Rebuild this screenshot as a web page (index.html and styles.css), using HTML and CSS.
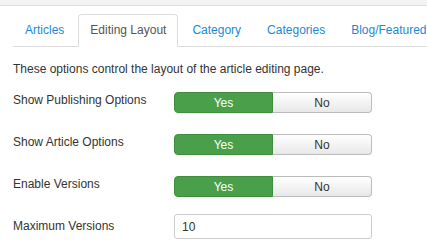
FILE: index.html
```html
<!DOCTYPE html>
<html lang="en">
<head>
    <meta charset="UTF-8">
    <title>Editing Layout</title>
    <link rel="stylesheet" href="styles.css">
</head>
<body>
    <div class="topbar"></div>

    <div class="content">
        <!-- tabs -->
        <ul class="nav-tabs">
            <li><a href="#">Articles</a></li>
            <li class="active"><a href="#">Editing Layout</a></li>
            <li><a href="#">Category</a></li>
            <li><a href="#">Categories</a></li>
            <li><a href="#">Blog/Featured Layouts</a></li>
        </ul>

        <p class="tab-desc">These options control the layout of the article editing page.</p>

        <div class="control-group">
            <label class="control-label">Show Publishing Options</label>
            <div class="btn-group">
                <button class="btn btn-yes">Yes</button>
                <button class="btn btn-no">No</button>
            </div>
        </div>

        <div class="control-group">
            <label class="control-label">Show Article Options</label>
            <div class="btn-group">
                <button class="btn btn-yes">Yes</button>
                <button class="btn btn-no">No</button>
            </div>
        </div>

        <div class="control-group">
            <label class="control-label">Enable Versions</label>
            <div class="btn-group">
                <button class="btn btn-yes">Yes</button>
                <button class="btn btn-no">No</button>
            </div>
        </div>

        <div class="control-group">
            <label class="control-label">Maximum Versions</label>
            <input class="text-input" type="text" value="10">
        </div>
    </div>
</body>
</html>
```

FILE: styles.css
```css
/* base */
body {
    margin: 0;
    font-family: "Liberation Sans", Arial, sans-serif;
    font-size: 12px;
    color: #333;
    background: #fff;
    overflow: hidden;
}

.topbar {
    height: 5px;
    background-color: #f3f3f3;
    border-bottom: 1px solid #ddd;
}

.content {
    padding-left: 13px;
}

/* tabs */
.nav-tabs {
    list-style: none;
    margin: 8px 0 0;
    padding: 0;
    display: flex;
    white-space: nowrap;
    border-bottom: 1px solid #ddd;
}

.nav-tabs li {
    margin-bottom: -1px;
    margin-right: 2px;
}

.nav-tabs a {
    display: block;
    padding: 7px 11px;
    line-height: 17px;
    color: #1a8ad6;
    text-decoration: none;
    border: 1px solid transparent;
    border-radius: 4px 4px 0 0;
}

.nav-tabs .active a {
    color: #555;
    background-color: #fff;
    border-color: #ddd #ddd #fff;
}

.tab-desc {
    margin: 14px 0 10px;
    line-height: 17px;
}

/* form rows */
.control-group {
    display: flex;
    align-items: flex-start;
    margin-bottom: 17px;
}

.control-label {
    width: 161px;
    padding-top: 4px;
    line-height: 17px;
}

.btn-group {
    display: flex;
    margin-top: 4px;
}

.btn {
    width: 99px;
    height: 21px;
    padding: 0;
    font-family: inherit;
    font-size: 12px;
    cursor: pointer;
}

.btn-yes {
    color: #fff;
    background: #4aa04a;
    border: 1px solid #3e8e3e;
    border-radius: 4px 0 0 4px;
}

.btn-no {
    color: #333;
    background: linear-gradient(#fff, #e8e8e8);
    border: 1px solid #bbb;
    border-left: none;
    border-radius: 0 4px 4px 0;
}

.text-input {
    box-sizing: border-box;
    width: 198px;
    height: 25px;
    padding: 0 7px;
    font-family: inherit;
    font-size: 12px;
    color: #333;
    border: 1px solid #ccc;
    border-radius: 3px;
}
```
